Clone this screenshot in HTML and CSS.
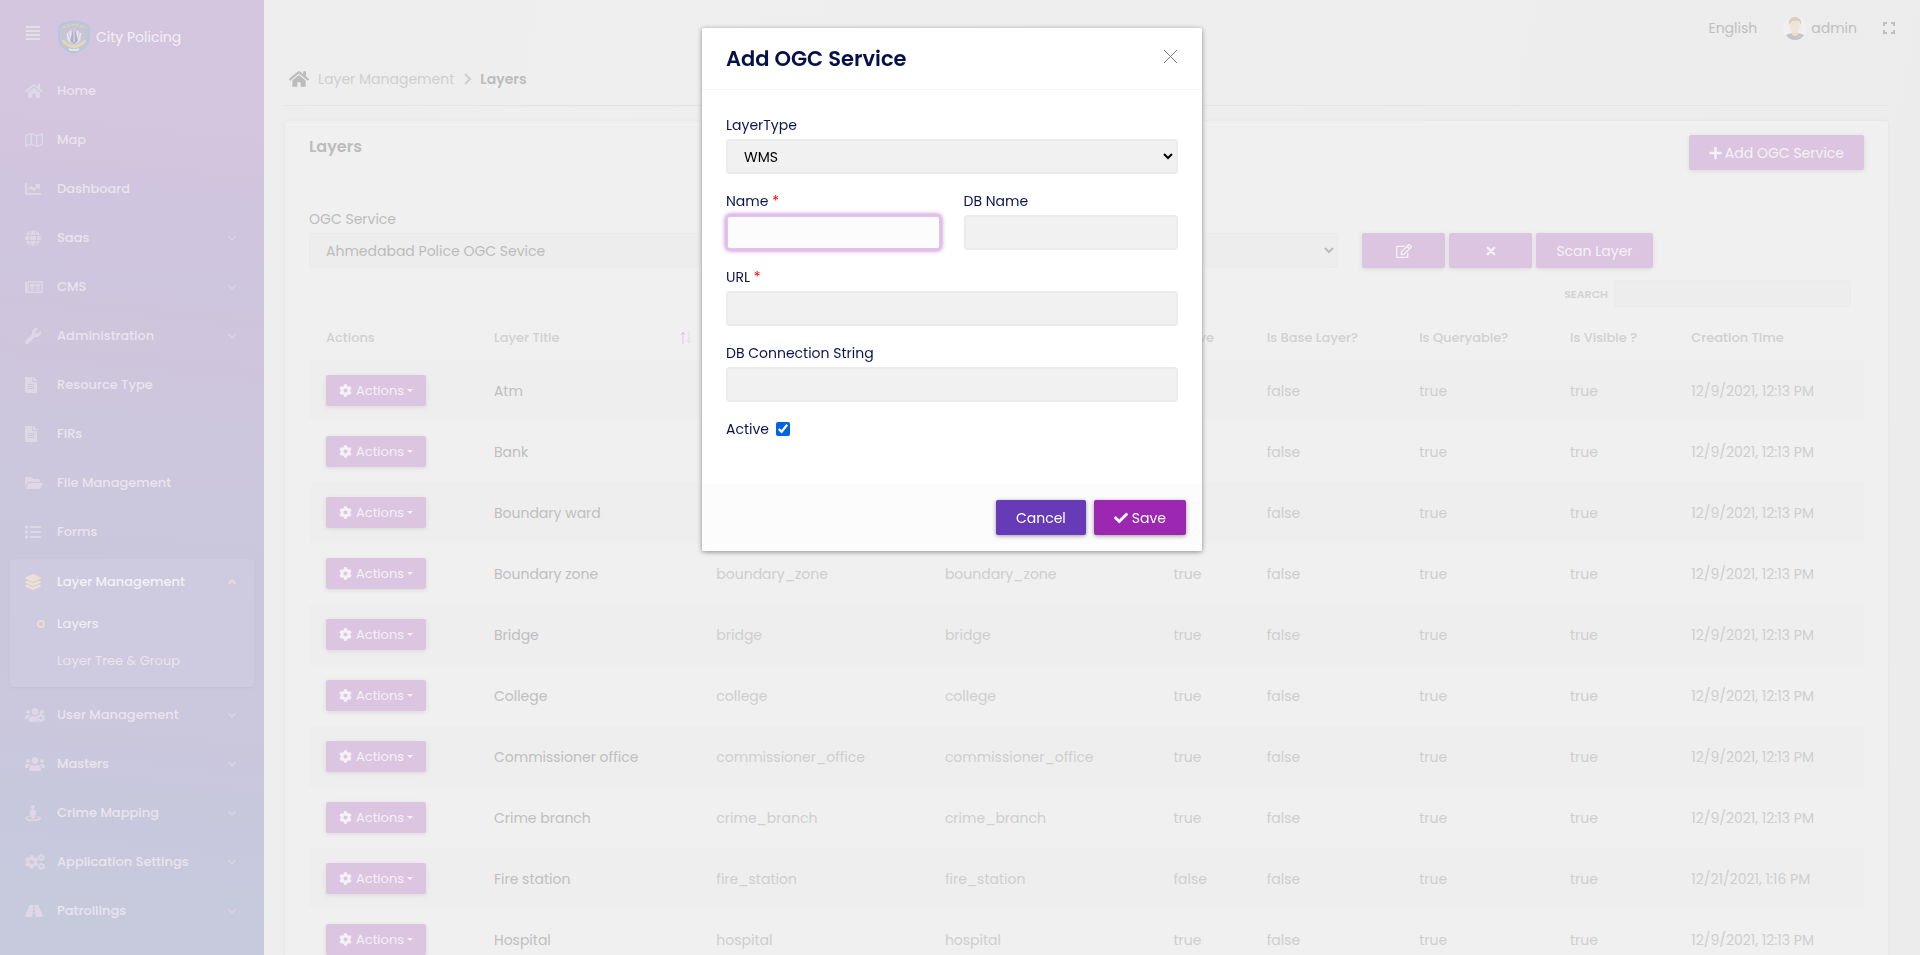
FILE: index.html
```html
<!DOCTYPE html>
<html lang="en">
<head>
<meta charset="utf-8">
<title>City Policing - Layers</title>
<link rel="stylesheet" href="styles.css">
</head>
<body>
<svg class="sprite" aria-hidden="true">
  <symbol id="home" viewBox="0 0 576 512"><path d="M280.37 148.26L96 300.11V464a16 16 0 0 0 16 16l112.06-.29a16 16 0 0 0 15.92-16V368a16 16 0 0 1 16-16h64a16 16 0 0 1 16 16v95.64a16 16 0 0 0 16 16.05L464 480a16 16 0 0 0 16-16V300L295.67 148.26a12.19 12.19 0 0 0-15.3 0zM571.6 251.47L488 182.56V44.05a12 12 0 0 0-12-12h-56a12 12 0 0 0-12 12v72.61L318.47 43a48 48 0 0 0-61 0L4.34 251.47a12 12 0 0 0-1.6 16.9l25.5 31A12 12 0 0 0 45.15 301l235.22-193.74a12.19 12.19 0 0 1 15.3 0L530.9 301a12 12 0 0 0 16.9-1.6l25.5-31a12 12 0 0 0-1.7-16.93z"/></symbol>
  <symbol id="map" viewBox="0 0 576 512"><path d="M560.02 32c-1.96 0-3.98.37-5.96 1.16L384.01 96H384L212 35.28A64.252 64.252 0 0 0 191.76 32c-6.69 0-13.37 1.05-19.81 3.14L20.12 87.95A32.006 32.006 0 0 0 0 117.66v346.32C0 473.17 7.53 480 15.99 480c1.96 0 3.97-.37 5.96-1.16L192 416l172 60.71a63.98 63.98 0 0 0 40.05.15l151.83-52.81A31.996 31.996 0 0 0 576 394.34V48.02c0-9.19-7.53-16.02-15.98-16.02zM224 90.42l128 45.19v285.97l-128-45.19V90.42zM48 418.05V129.07l128-44.53v286.2l-.64.23L48 418.05zm480-35.13l-128 44.53V141.26l.64-.24L528 93.95v288.97z"/></symbol>
  <symbol id="chart" viewBox="0 0 512 512"><path d="M496 384H64V80c0-8.84-7.16-16-16-16H16C7.16 64 0 71.16 0 80v336c0 17.67 14.33 32 32 32h464c8.84 0 16-7.16 16-16v-32c0-8.84-7.16-16-16-16zM464 96H345.94c-21.38 0-32.09 25.85-16.97 40.97l32.4 32.4L288 242.75l-73.37-73.37c-12.5-12.5-32.76-12.5-45.25 0l-68.69 68.69c-6.25 6.25-6.25 16.38 0 22.63l22.62 22.62c6.25 6.25 16.38 6.25 22.63 0L192 237.25l73.37 73.37c12.5 12.5 32.76 12.5 45.25 0l96-96 32.4 32.4c15.12 15.12 40.97 4.41 40.97-16.97V112c.01-8.84-7.15-16-15.99-16z"/></symbol>
  <symbol id="globe" viewBox="0 0 496 512"><path d="M336.5 160C322 70.7 287.8 8 248 8s-74 62.7-88.5 152h177zM152 256c0 22.2 1.2 43.5 3.3 64h185.3c2.1-20.5 3.3-41.8 3.3-64s-1.2-43.5-3.3-64H155.3c-2.1 20.5-3.3 41.8-3.3 64zm324.7-96c-28.6-67.9-86.5-120.4-158-141.6 24.4 33.8 41.2 84.7 50 141.6h108zM177.2 18.4C105.8 39.6 47.8 92.1 19.3 160h108c8.7-56.9 25.5-107.8 49.9-141.6zM487.4 192H372.7c2.1 21 3.3 42.5 3.3 64s-1.2 43-3.3 64h114.6c5.5-20.5 8.6-41.8 8.6-64s-3.1-43.5-8.5-64zM120 256c0-21.5 1.2-43 3.3-64H8.6C3.2 212.5 0 233.8 0 256s3.2 43.5 8.6 64h114.6c-2-21-3.2-42.5-3.2-64zm39.5 96c14.5 89.3 48.7 152 88.5 152s74-62.7 88.5-152h-177zm159.3 141.6c71.4-21.2 129.4-73.7 158-141.6h-108c-8.8 56.9-25.6 107.8-50 141.6zM19.3 352c28.6 67.9 86.5 120.4 158 141.6-24.4-33.8-41.2-84.7-50-141.6h-108z"/></symbol>
  <symbol id="news" viewBox="0 0 576 512"><path fill-rule="evenodd" d="M120 64h432a24 24 0 0 1 24 24v336a24 24 0 0 1-24 24H56a56 56 0 0 1-56-56V120a24 24 0 0 1 24-24h40v296a8 8 0 0 0 16 0V88a24 24 0 0 1 40-24zm8 48v288h400V112zM160 148h144v120H160zM336 148h152v32H336zM336 192h152v32H336zM336 236h152v32H336zM160 292h144v28H160zM160 336h144v28H160zM336 292h152v28H336zM336 336h152v28H336z"/></symbol>
  <symbol id="wrench" viewBox="0 0 512 512"><path d="M507.73 109.1c-2.24-9.03-13.54-12.09-20.12-5.51l-74.36 74.36-67.88-11.31-11.31-67.88 74.36-74.36c6.62-6.62 3.43-17.9-5.66-20.16-47.38-11.74-99.55.91-136.58 37.93-39.64 39.64-50.55 97.1-34.05 147.2L18.74 402.76c-24.99 24.99-24.99 65.51 0 90.5 24.99 24.99 65.51 24.99 90.5 0l213.21-213.21c50.12 16.71 107.47 5.68 147.37-34.22 37.07-37.07 49.7-89.32 37.91-136.73z"/></symbol>
  <symbol id="file" viewBox="0 0 384 512"><path d="M224 136V0H24C10.7 0 0 10.7 0 24v464c0 13.3 10.7 24 24 24h336c13.3 0 24-10.7 24-24V160H248c-13.2 0-24-10.8-24-24zm64 236c0 6.6-5.4 12-12 12H108c-6.6 0-12-5.4-12-12v-8c0-6.6 5.4-12 12-12h168c6.6 0 12 5.4 12 12v8zm0-64c0 6.6-5.4 12-12 12H108c-6.6 0-12-5.4-12-12v-8c0-6.6 5.4-12 12-12h168c6.6 0 12 5.4 12 12v8zm0-72v8c0 6.6-5.4 12-12 12H108c-6.6 0-12-5.4-12-12v-8c0-6.6 5.4-12 12-12h168c6.6 0 12 5.4 12 12zm96-114.1v6.1H256V0h6.1c6.4 0 12.5 2.5 17 7l97.9 98c4.5 4.5 7 10.6 7 16.9z"/></symbol>
  <symbol id="folder" viewBox="0 0 576 512"><path d="M572.694 292.093L500.27 416.248A63.997 63.997 0 0 1 444.989 448H45.025c-18.523 0-30.064-20.093-20.731-36.093l72.424-124.155A64 64 0 0 1 152 256h399.964c18.523 0 30.064 20.093 20.73 36.093zM152 224h328v-48c0-26.51-21.49-48-48-48H272l-64-64H48C21.49 64 0 85.49 0 112v278.046l69.077-118.418C86.214 242.25 117.989 224 152 224z"/></symbol>
  <symbol id="list" viewBox="0 0 512 512"><path d="M16 48h64a16 16 0 0 1 16 16v64a16 16 0 0 1-16 16H16a16 16 0 0 1-16-16V64a16 16 0 0 1 16-16zM16 208h64a16 16 0 0 1 16 16v64a16 16 0 0 1-16 16H16a16 16 0 0 1-16-16v-64a16 16 0 0 1 16-16zM16 368h64a16 16 0 0 1 16 16v64a16 16 0 0 1-16 16H16a16 16 0 0 1-16-16v-64a16 16 0 0 1 16-16zM176 64h320a16 16 0 0 1 16 16v32a16 16 0 0 1-16 16H176a16 16 0 0 1-16-16V80a16 16 0 0 1 16-16zM176 224h320a16 16 0 0 1 16 16v32a16 16 0 0 1-16 16H176a16 16 0 0 1-16-16v-32a16 16 0 0 1 16-16zM176 384h320a16 16 0 0 1 16 16v32a16 16 0 0 1-16 16H176a16 16 0 0 1-16-16v-32a16 16 0 0 1 16-16z"/></symbol>
  <symbol id="layers" viewBox="0 0 512 512"><path d="M12.41 148.02l232.94 105.67c6.8 3.09 14.49 3.09 21.29 0l232.94-105.67c16.55-7.51 16.55-32.52 0-40.03L266.65 2.31a25.607 25.607 0 0 0-21.29 0L12.41 107.98c-16.55 7.51-16.55 32.53 0 40.04zm487.18 88.28l-58.09-26.33-161.64 73.27c-7.56 3.43-15.59 5.17-23.86 5.17s-16.29-1.74-23.86-5.17L70.51 209.97l-58.1 26.33c-16.55 7.5-16.55 32.5 0 40l232.94 105.59c6.8 3.08 14.49 3.08 21.29 0L499.59 276.3c16.55-7.5 16.55-32.5 0-40zm0 127.8l-57.87-26.23-161.86 73.37c-7.56 3.43-15.59 5.17-23.86 5.17s-16.29-1.74-23.86-5.17L70.29 337.87 12.41 364.1c-16.55 7.5-16.55 32.5 0 40l232.94 105.59c6.8 3.08 14.49 3.08 21.29 0L499.59 404.1c16.55-7.5 16.55-32.5 0-40z"/></symbol>
  <symbol id="cog" viewBox="0 0 512 512"><path d="M487.4 315.7l-42.6-24.6c4.3-23.2 4.3-47 0-70.2l42.6-24.6c4.9-2.8 7.1-8.6 5.5-14-11.1-35.6-30-67.8-54.7-94.6-3.8-4.1-10-5.1-14.8-2.3L380.8 110c-17.9-15.4-38.5-27.3-60.8-35.1V25.8c0-5.6-3.9-10.5-9.4-11.7-36.7-8.2-74.3-7.8-109.2 0-5.5 1.2-9.4 6.1-9.4 11.7V75c-22.2 7.9-42.8 19.8-60.8 35.1L88.7 85.5c-4.9-2.8-11-1.9-14.8 2.3-24.7 26.7-43.6 58.9-54.7 94.6-1.7 5.4.6 11.2 5.5 14L67.3 221c-4.3 23.2-4.3 47 0 70.2l-42.6 24.6c-4.9 2.8-7.1 8.6-5.5 14 11.1 35.6 30 67.8 54.7 94.6 3.8 4.1 10 5.1 14.8 2.3l42.6-24.6c17.9 15.4 38.5 27.3 60.8 35.1v49.2c0 5.6 3.9 10.5 9.4 11.7 36.7 8.2 74.3 7.8 109.2 0 5.5-1.2 9.4-6.1 9.4-11.7v-49.2c22.2-7.9 42.8-19.8 60.8-35.1l42.6 24.6c4.9 2.8 11 1.9 14.8-2.3 24.7-26.7 43.6-58.9 54.7-94.6 1.5-5.5-.7-11.3-5.6-14.1zM256 336c-44.1 0-80-35.9-80-80s35.9-80 80-80 80 35.9 80 80-35.9 80-80 80z"/></symbol>
  <symbol id="userscog" viewBox="0 0 640 512"><circle cx="96" cy="160" r="64"/><circle cx="320" cy="144" r="112"/><path d="M173 275C161 263 146 256 128 256H64c-35 0-64 29-64 64v32c0 18 14 32 32 32h66c6-47 35-87 75-109zM243 288c-63 0-115 52-115 115v29c0 26 22 48 48 48h230c-18-10-20-30-12-46-22-12-30-32-20-50l14-26c-14-26-10-50 16-66-50 0-50 12-84 12s-48-16-77-16zM480 150c-20 30-16 60 0 76l60-14 44-10c40-50 8-106-40-106-28 0-50 18-64 54z"/><use href="#cog" x="356" y="206" width="290" height="290"/></symbol>
  <symbol id="users" viewBox="0 0 640 512"><path d="M96 224c35.3 0 64-28.7 64-64s-28.7-64-64-64-64 28.7-64 64 28.7 64 64 64zm448 0c35.3 0 64-28.7 64-64s-28.7-64-64-64-64 28.7-64 64 28.7 64 64 64zm32 32h-64c-17.6 0-33.5 7.1-45.1 18.6 40.3 22.1 68.9 62 75.1 109.4h66c17.7 0 32-14.3 32-32v-32c0-35.3-28.7-64-64-64zm-256 0c61.9 0 112-50.1 112-112S381.9 32 320 32 208 82.1 208 144s50.1 112 112 112zm76.8 32h-8.3c-20.8 10-43.9 16-68.5 16s-47.6-6-68.5-16h-8.3C179.6 288 128 339.6 128 403.2V432c0 26.5 21.5 48 48 48h288c26.5 0 48-21.5 48-48v-28.8c0-63.6-51.6-115.2-115.2-115.2zm-223.7-13.4C161.5 263.1 145.6 256 128 256H64c-35.3 0-64 28.7-64 64v32c0 17.7 14.3 32 32 32h65.9c6.3-47.4 34.9-87.3 75.2-109.4z"/></symbol>
  <symbol id="street" viewBox="0 0 512 512"><circle cx="256" cy="64" r="64"/><path d="M224 144h64c36 0 64 28 64 58v92c0 18-14 30-32 32v74c0 18-14 32-32 32h-64c-18 0-32-14-32-32v-74c-18-2-32-14-32-32v-92c0-30 28-58 64-58zM144 344v34c-52 8-84 22-84 36 0 26 88 48 196 48s196-22 196-48c0-14-32-28-84-36v-34c88 14 144 42 144 76 0 54-114 92-256 92S0 474 0 420c0-34 56-62 144-76z"/></symbol>
  <symbol id="cogs" viewBox="0 0 640 512"><use href="#cog" x="-14" y="30" width="452" height="452"/><use href="#cog" x="400" y="-6" width="246" height="246"/><use href="#cog" x="400" y="272" width="246" height="246"/></symbol>
  <symbol id="road" viewBox="0 0 576 512"><path d="M573.19 402.67l-139.79-320C428.43 71.29 417.6 64 405.68 64h-97.59l2.45 23.16c.5 4.72-3.21 8.84-7.96 8.84h-29.16c-4.75 0-8.46-4.12-7.96-8.84L267.91 64h-97.59c-11.93 0-22.76 7.29-27.73 18.67L2.8 402.67C-6.45 423.86 8.31 448 30.54 448h196.84l10.31-97.68c.86-8.14 7.72-14.32 15.91-14.32h68.8c8.19 0 15.05 6.18 15.91 14.32L348.62 448h196.84c22.23 0 36.99-24.14 27.73-45.33zM260.4 135.16a8 8 0 0 1 7.96-7.16h39.29c4.09 0 7.53 3.09 7.96 7.16l4.6 43.58c.75 7.09-4.81 13.26-11.93 13.26h-40.54c-7.13 0-12.68-6.17-11.93-13.26l4.59-43.58zM315.64 304h-55.29c-9.5 0-16.91-8.23-15.91-17.68l5.07-48c.86-8.14 7.72-14.32 15.91-14.32h45.15c8.19 0 15.05 6.18 15.91 14.32l5.07 48c1 9.45-6.41 17.68-15.91 17.68z"/></symbol>
  <symbol id="plus" viewBox="0 0 448 512"><path d="M416 208H272V64c0-17.67-14.33-32-32-32h-32c-17.67 0-32 14.33-32 32v144H32c-17.67 0-32 14.33-32 32v32c0 17.67 14.33 32 32 32h144v144c0 17.67 14.33 32 32 32h32c17.67 0 32-14.33 32-32V304h144c17.67 0 32-14.33 32-32v-32c0-17.67-14.33-32-32-32z"/></symbol>
  <symbol id="edit" viewBox="0 0 576 512"><path d="M402.3 344.9l32-32c5-5 13.7-1.5 13.7 5.7V464c0 26.5-21.5 48-48 48H48c-26.5 0-48-21.5-48-48V112c0-26.5 21.5-48 48-48h273.5c7.1 0 10.7 8.6 5.7 13.7l-32 32c-1.5 1.5-3.5 2.3-5.7 2.3H48v352h352V350.5c0-2.1.8-4.1 2.3-5.6zm156.6-201.8L296.3 405.7l-90.4 10c-26.2 2.9-48.5-19.2-45.6-45.6l10-90.4L432.9 17.1c22.9-22.9 59.9-22.9 82.7 0l43.2 43.2c22.9 22.9 22.9 60 .1 82.8zM460.1 174L402 115.9 216.2 301.8l-7.3 65.3 65.3-7.3L460.1 174zm64.8-79.7l-43.2-43.2c-4.1-4.1-10.8-4.1-14.8 0L436 82l58.1 58.1 30.9-30.9c4-4.2 4-10.8-.1-14.9z"/></symbol>
  <symbol id="times" viewBox="0 0 352 512"><path d="M60 140l232 232M292 140L60 372" fill="none" stroke="currentColor" stroke-width="88" stroke-linecap="round"/></symbol>
  <symbol id="check" viewBox="0 0 512 512"><path d="M173.898 439.404l-166.4-166.4c-9.997-9.997-9.997-26.206 0-36.204l36.203-36.204c9.997-9.998 26.207-9.998 36.204 0L192 312.69 432.095 72.596c9.997-9.997 26.207-9.997 36.204 0l36.203 36.204c9.997 9.997 9.997 26.206 0 36.204l-294.4 294.401c-9.998 9.997-26.207 9.997-36.204-.001z"/></symbol>
  <symbol id="down" viewBox="0 0 10 16"><path d="M1 6l4 4 4-4" fill="none" stroke="currentColor" stroke-width="2"/></symbol>
  <symbol id="up" viewBox="0 0 10 16"><path d="M1 10l4-4 4 4" fill="none" stroke="currentColor" stroke-width="2"/></symbol>
</svg>

<aside class="sidebar">
  <header class="brand">
    <button class="burger" type="button" aria-label="Toggle menu"><svg viewBox="0 0 14 14"><path d="M0 1h14M0 5h14M0 9h14M0 13h14" stroke="currentColor" stroke-width="2"/></svg></button>
    <a class="brand-link" href="#">
      <svg class="crest" viewBox="0 0 32 34"><path d="M1 6Q16-3 31 6v14q-2 9-15 13Q3 29 1 20z" fill="#c8c3d6" stroke="#abcbdc" stroke-width="1.4"/><path d="M5 8q11-6 22 0" fill="none" stroke="#dbd5b4" stroke-width="2" stroke-dasharray="3 1.5"/><circle cx="16" cy="17" r="7.500" fill="#d5d3e2"/><path d="M9 13l3 9M23 13l-3 9M12 11l2 9M20 11l-2 9" stroke="#e9e7ef" stroke-width="1.3"/><path d="M16 5l2 8 2 8-4 3-4-3 2-8z" fill="#b2b0c4"/><path d="M16 7v15" stroke="#dddbe8" stroke-width="1.2"/><path d="M5 20q2 5 11 7 9-2 11-7" fill="none" stroke="#e0dab2" stroke-width="3"/><path d="M11 29l2 1h6l2-1" fill="none" stroke="#efedf2" stroke-width="1.4"/></svg>
      <span>City Policing</span>
    </a>
  </header>
  <nav class="nav" aria-label="Main">
    <a class="nav-item" href="#"><svg class="ic w18"><use href="#home"/></svg><span>Home</span></a>
    <a class="nav-item" href="#"><svg class="ic w18"><use href="#map"/></svg><span>Map</span></a>
    <a class="nav-item" href="#"><svg class="ic"><use href="#chart"/></svg><span>Dashboard</span></a>
    <a class="nav-item" href="#"><svg class="ic"><use href="#globe"/></svg><span>Saas</span><svg class="arrow"><use href="#down"/></svg></a>
    <a class="nav-item" href="#"><svg class="ic w18"><use href="#news"/></svg><span>CMS</span><svg class="arrow"><use href="#down"/></svg></a>
    <a class="nav-item" href="#"><svg class="ic"><use href="#wrench"/></svg><span>Administration</span><svg class="arrow"><use href="#down"/></svg></a>
    <a class="nav-item" href="#"><svg class="ic w12"><use href="#file"/></svg><span>Resource Type</span></a>
    <a class="nav-item" href="#"><svg class="ic w12"><use href="#file"/></svg><span>FIRs</span></a>
    <a class="nav-item" href="#"><svg class="ic w18"><use href="#folder"/></svg><span>File Management</span></a>
    <a class="nav-item" href="#"><svg class="ic"><use href="#list"/></svg><span>Forms</span></a>
    <div class="nav-group">
      <a class="nav-item active" href="#"><svg class="ic"><use href="#layers"/></svg><span>Layer Management</span><svg class="arrow"><use href="#up"/></svg></a>
      <a class="sub-item current" href="#"><i class="ring"></i><span>Layers</span></a>
      <a class="sub-item" href="#"><span>Layer Tree &amp; Group</span></a>
    </div>
    <a class="nav-item" href="#"><svg class="ic w20"><use href="#userscog"/></svg><span>User Management</span><svg class="arrow"><use href="#down"/></svg></a>
    <a class="nav-item" href="#"><svg class="ic w20"><use href="#users"/></svg><span>Masters</span><svg class="arrow"><use href="#down"/></svg></a>
    <a class="nav-item" href="#"><svg class="ic"><use href="#street"/></svg><span>Crime Mapping</span><svg class="arrow"><use href="#down"/></svg></a>
    <a class="nav-item" href="#"><svg class="ic w20"><use href="#cogs"/></svg><span>Application Settings</span><svg class="arrow"><use href="#down"/></svg></a>
    <a class="nav-item" href="#"><svg class="ic w18"><use href="#road"/></svg><span>Patrollings</span><svg class="arrow"><use href="#down"/></svg></a>
  </nav>
</aside>

<main class="main">
  <div class="topbar">
    <a class="top-link" href="#">English</a>
    <a class="top-link user" href="#">
      <svg class="avatar" viewBox="0 0 24 24"><circle cx="12" cy="12" r="12" fill="#f0f0f0"/><path d="M3 19q4-2 9-2t9 2q-3 5-9 5t-9-5z" fill="#c4c5c8"/><path d="M9 14h6v5q-3 2-6 0z" fill="#ecdfd2"/><ellipse cx="12" cy="10" rx="5" ry="7" fill="#efe4d8"/><path d="M6 9Q5 1 12 1t6 8l-2-4H9z" fill="#dbd0bf"/></svg>
      <span>admin</span>
    </a>
    <button class="expand" type="button" aria-label="Full screen"><svg viewBox="0 0 12 12"><path d="M1 4V1h3M8 1h3v3M11 8v3H8M4 11H1V8" fill="none" stroke="currentColor" stroke-width="2"/></svg></button>
  </div>
  <nav class="crumbs" aria-label="Breadcrumb">
    <a class="crumb-home" href="#" aria-label="Home"><svg><use href="#home"/></svg></a>
    <a class="crumb" href="#">Layer Management</a>
    <svg class="crumb-sep" viewBox="0 0 8 12"><path d="M1 1l5 5-5 5" fill="none" stroke="currentColor" stroke-width="2"/></svg>
    <span class="crumb-current">Layers</span>
  </nav>

  <section class="card">
    <div class="card-head">
      <h1>Layers</h1>
      <button class="btn add" type="button"><svg class="plus"><use href="#plus"/></svg>Add OGC Service</button>
    </div>
    <div class="filters">
      <div class="filter-field">
        <label for="service">OGC Service</label>
        <select id="service"><option>Ahmedabad Police OGC Sevice</option></select>
      </div>
      <div class="filter-actions">
        <button class="btn square" type="button" aria-label="Edit"><svg class="edit"><use href="#edit"/></svg></button>
        <button class="btn square" type="button" aria-label="Delete"><svg class="times"><use href="#times"/></svg></button>
        <button class="btn" type="button">Scan Layer</button>
      </div>
    </div>
    <div class="search">
      <label for="search">SEARCH</label>
      <input id="search" type="search">
    </div>
    <table class="grid">
      <colgroup><col class="c-actions"><col class="c-title"><col class="c-name"><col class="c-name"><col class="c-active"><col class="c-base"><col class="c-query"><col class="c-visible"><col class="c-time"></colgroup>
      <thead>
        <tr><th>Actions</th><th><span class="sortable">Layer Title<svg class="sort" viewBox="0 0 11 13"><path d="M3 13V1M1 4l2-3 2 3" fill="none" stroke="#dcc5e1"/><path d="M9 0v11M7 9l2 3 2-3" fill="none" stroke="#e0e0e0"/></svg></span></th><th></th><th></th><th>Active</th><th>Is Base Layer?</th><th>Is Queryable?</th><th>Is Visible ?</th><th>Creation Time</th></tr>
      </thead>
      <tbody>
        <tr><td><button class="btn act" type="button"><svg><use href="#cog"/></svg>Actions<i class="caret"></i></button></td><td class="strong">Atm</td><td></td><td></td><td></td><td>false</td><td>true</td><td>true</td><td>12/9/2021, 12:13 PM</td></tr>
        <tr><td><button class="btn act" type="button"><svg><use href="#cog"/></svg>Actions<i class="caret"></i></button></td><td class="strong">Bank</td><td></td><td></td><td></td><td>false</td><td>true</td><td>true</td><td>12/9/2021, 12:13 PM</td></tr>
        <tr><td><button class="btn act" type="button"><svg><use href="#cog"/></svg>Actions<i class="caret"></i></button></td><td class="strong">Boundary ward</td><td></td><td></td><td></td><td>false</td><td>true</td><td>true</td><td>12/9/2021, 12:13 PM</td></tr>
        <tr><td><button class="btn act" type="button"><svg><use href="#cog"/></svg>Actions<i class="caret"></i></button></td><td class="strong">Boundary zone</td><td>boundary_zone</td><td>boundary_zone</td><td>true</td><td>false</td><td>true</td><td>true</td><td>12/9/2021, 12:13 PM</td></tr>
        <tr><td><button class="btn act" type="button"><svg><use href="#cog"/></svg>Actions<i class="caret"></i></button></td><td class="strong">Bridge</td><td>bridge</td><td>bridge</td><td>true</td><td>false</td><td>true</td><td>true</td><td>12/9/2021, 12:13 PM</td></tr>
        <tr><td><button class="btn act" type="button"><svg><use href="#cog"/></svg>Actions<i class="caret"></i></button></td><td class="strong">College</td><td>college</td><td>college</td><td>true</td><td>false</td><td>true</td><td>true</td><td>12/9/2021, 12:13 PM</td></tr>
        <tr><td><button class="btn act" type="button"><svg><use href="#cog"/></svg>Actions<i class="caret"></i></button></td><td class="strong">Commissioner office</td><td>commissioner_office</td><td>commissioner_office</td><td>true</td><td>false</td><td>true</td><td>true</td><td>12/9/2021, 12:13 PM</td></tr>
        <tr><td><button class="btn act" type="button"><svg><use href="#cog"/></svg>Actions<i class="caret"></i></button></td><td class="strong">Crime branch</td><td>crime_branch</td><td>crime_branch</td><td>true</td><td>false</td><td>true</td><td>true</td><td>12/9/2021, 12:13 PM</td></tr>
        <tr><td><button class="btn act" type="button"><svg><use href="#cog"/></svg>Actions<i class="caret"></i></button></td><td class="strong">Fire station</td><td>fire_station</td><td>fire_station</td><td>false</td><td>false</td><td>true</td><td>true</td><td>12/21/2021, 1:16 PM</td></tr>
        <tr><td><button class="btn act" type="button"><svg><use href="#cog"/></svg>Actions<i class="caret"></i></button></td><td class="strong">Hospital</td><td>hospital</td><td>hospital</td><td>true</td><td>false</td><td>true</td><td>true</td><td>12/9/2021, 12:13 PM</td></tr>
      </tbody>
    </table>
  </section>
</main>

<div class="modal-layer">
  <form class="modal" role="dialog" aria-modal="true" aria-labelledby="modal-title">
    <header class="modal-head">
      <h2 id="modal-title">Add OGC Service</h2>
      <button class="close" type="button" aria-label="Close"><svg viewBox="0 0 13 13"><path d="M0 0l13 13M13 0L0 13" stroke="currentColor"/></svg></button>
    </header>
    <div class="modal-body">
      <div class="field"><label for="type">LayerType</label><select id="type"><option>WMS</option></select></div>
      <div class="pair">
        <div class="field"><label for="name">Name <b class="req">*</b></label><input class="focused" id="name" type="text"></div>
        <div class="field"><label for="dbname">DB Name</label><input id="dbname" type="text"></div>
      </div>
      <div class="field"><label for="url">URL <b class="req">*</b></label><input id="url" type="text"></div>
      <div class="field"><label for="conn">DB Connection String</label><input id="conn" type="text"></div>
      <div class="check"><label for="active">Active</label><input id="active" type="checkbox" checked></div>
    </div>
    <footer class="modal-foot">
      <button class="mbtn cancel" type="button">Cancel</button>
      <button class="mbtn save" type="button"><svg><use href="#check"/></svg>Save</button>
    </footer>
  </form>
</div>
</body>
</html>
```
FILE: styles.css
```css
* { box-sizing: border-box; }
body {
  margin: 0;
  height: 100vh;
  overflow: hidden;
  display: flex;
  background: linear-gradient(100deg, #ececec, #efefef 30%, #ededed 75%, #ececec);
  font: 14px/20px Poppins, Inter, "Open Sans", sans-serif;
  color: #cecece;
}
a { color: inherit; text-decoration: none; }
button, input, select { font: inherit; margin: 0; }
button { border: 0; background: none; padding: 0; color: inherit; }
h1, h2 { margin: 0; }
svg { display: block; fill: currentColor; }
.sprite { position: absolute; width: 0; height: 0; }

.sidebar {
  flex: none;
  width: 264px;
  height: 100vh;
  overflow: hidden;
  color: #e9e4ee;
  background: linear-gradient(186deg, #d3c6de 0%, #d3c5dd 16%, #d0c5de 20%, #cec6de 30%, #cfc5dc 36%, #ccc7dd 46%, #cac7dc 60%, #cbc7dd 75%, #c8c8dd 82%, #c7cadd 100%);
}
.brand { display: flex; align-items: center; height: 66px; padding: 0 26px; gap: 18px; }
.burger { color: #e5dfeb; }
.burger svg { width: 14px; height: 14px; }
.brand-link { display: flex; align-items: center; gap: 6px; color: #f3eff6; padding-top: 8px; }
.crest { width: 32px; height: 34px; }
.nav { display: flex; flex-direction: column; }
.nav-item { display: flex; align-items: center; height: 49px; padding: 0 27px 0 25px; font-size: 13px; font-weight: 500; }
.nav-item span { flex: 1; }
.ic { flex: none; width: 16px; height: 16px; margin-right: 16px; color: #ddd7e7; }
.ic.w12 { width: 12px; margin-right: 20px; }
.ic.w18 { width: 18px; margin-right: 14px; }
.ic.w20 { width: 20px; margin-right: 12px; }
.arrow { width: 10px; height: 14px; color: #d9d3e4; }
.nav-group { margin: 3px 10px; padding-bottom: 8px; border-radius: 3px; background: #cecadf; box-shadow: 0 1px 3px #c3c0d5; }
.nav-group .nav-item { height: 46px; padding: 0 17px 0 15px; }
.active { color: #f3f1f6; }
.active .ic, .active .arrow { color: #eddfd3; }
.sub-item { display: flex; align-items: center; height: 37px; padding-left: 47px; font-size: 13px; }
.current { padding-left: 27px; gap: 12px; color: #f3f1f6; }
.ring { width: 8px; height: 8px; border: 2px solid #eddccd; border-radius: 50%; }

.main { flex: 1; min-width: 0; padding: 0 32px 0 21px; }
.topbar { display: flex; justify-content: flex-end; align-items: center; height: 56px; gap: 26px; margin-right: -7px; color: #bfbfbf; }
.user { display: flex; align-items: center; gap: 4px; }
.avatar { width: 24px; height: 24px; }
.expand svg { width: 12px; height: 12px; }
.crumbs { display: flex; align-items: center; height: 50px; padding: 0 4px 4px; border-bottom: 1px solid #e4e4e4; }
.crumb-home { color: #bcbcbc; }
.crumb-home svg { width: 20px; height: 18px; margin-right: 9px; }
.crumb-sep { width: 8px; height: 12px; margin: 0 8px 0 10px; }
.crumb-current { color: #bcbcbc; font-weight: 600; }

.card { margin-top: 15px; padding: 14px 24px 0; background: #f0f0f0; border-radius: 3px; box-shadow: 0 0 3px #dfdfdf; }
.card-head { display: flex; justify-content: space-between; align-items: flex-start; }
.card-head h1 { font-size: 16px; line-height: 24px; font-weight: 600; color: #bcbcbc; }
.btn {
  display: inline-flex; align-items: center; justify-content: center;
  height: 35px; padding: 0 20px;
  background: #dcc5e1; color: #f5f1f6; border-radius: 2px;
  box-shadow: 0 1px 4px #d8d8d8;
}
.plus { width: 13px; height: 14px; margin-right: 3px; }
.filters { display: grid; grid-template-columns: 66.2% 1fr; column-gap: 24px; align-items: end; margin-top: 39px; }
.filter-field { display: flex; flex-direction: column; gap: 4px; color: #bcbcbc; }
.filter-field select { height: 35px; padding: 0 12px; border: 1px solid #ebebeb; border-radius: 3px; background: #ededed; color: #bcbcbc; }
.filter-actions { display: flex; gap: 4px; }
.square { width: 83px; padding: 0; }
.edit { width: 16px; height: 14px; }
.times { width: 10px; height: 14px; }
.search { display: flex; justify-content: flex-end; align-items: center; gap: 6px; margin: 12px 13px 0 0; font-size: 11px; font-weight: 600; color: #d3d3d3; }
.search input { width: 237px; height: 27px; border: 1px solid #ebebeb; border-radius: 3px; background: #ededed; }
.grid { width: 100%; table-layout: fixed; border-collapse: collapse; margin-top: 12px; }
.c-actions { width: 10.8%; }
.c-title { width: 14.3%; }
.c-name { width: 14.7%; }
.c-active { width: 6%; }
.c-base { width: 9.8%; }
.c-query { width: 9.7%; }
.c-visible { width: 7.8%; }
.c-time { width: 12.2%; }
th { height: 41px; padding: 0 16px 4px 17px; text-align: left; font-size: 13px; font-weight: 500; color: #d0d0d0; white-space: nowrap; }
.sortable { display: flex; justify-content: space-between; align-items: center; }
.sort { width: 11px; height: 13px; margin-right: -8px; }
td { height: 61px; padding: 0 16px 0 17px; white-space: nowrap; color: #cecece; }
td.strong { color: #bfbfbf; }
tbody tr:nth-child(odd) { background: #eeeeee; }
.act { width: 100px; height: 31px; padding: 0; font-size: 13px; }
.act svg { width: 13px; height: 13px; margin-right: 4px; }
.caret { margin-left: 3px; border: 3px solid transparent; border-top-color: #f5f1f6; border-bottom: 0; }

.modal-layer { position: fixed; inset: 0; display: flex; justify-content: center; align-items: flex-start; padding: 28px 16px 28px 0; }
.modal { width: 500px; background: #fff; border-radius: 2px; box-shadow: 0 1px 5px #8a8a8a; color: #0a1550; overflow: hidden; }
.modal-head { display: flex; justify-content: space-between; padding: 16px 25px 16px 24px; border-bottom: 1px solid #f5f5f5; }
.modal-head h2 { font-size: 21px; line-height: 29px; font-weight: 600; color: #06114a; }
.close { align-self: flex-start; padding-top: 6px; color: #777; }
.close svg { width: 13px; height: 13px; }
.modal-body { display: flex; flex-direction: column; gap: 17px; padding: 25px 24px 45px; }
.field { display: flex; flex-direction: column; gap: 4px; }
.pair { display: grid; grid-template-columns: 1fr 1fr; gap: 23px; }
.field input, .field select { width: 100%; height: 35px; padding: 0 12px; border: 2px solid #ebebeb; border-radius: 4px; background: #f1f1f1; color: #000; }
.field .focused { background: #fcfcfc; border-color: #e3c1e8; box-shadow: 0 0 4px 1px #c98ad6; }
.req { color: #f00; font-weight: 400; }
.check { display: flex; align-items: center; gap: 7px; }
.check input { width: 14px; height: 14px; accent-color: #0063e3; }
.modal-foot { display: flex; justify-content: flex-end; gap: 8px; padding: 16px; background: #fcfcfc; }
.mbtn { display: flex; align-items: center; justify-content: center; height: 35px; padding: 0 20px; color: #fff; border-radius: 2px; box-shadow: 0 1px 4px #999; }
.mbtn svg { width: 14px; height: 14px; margin-right: 4px; }
.cancel { background: #673ab7; }
.save { background: #9c27b0; }
```
